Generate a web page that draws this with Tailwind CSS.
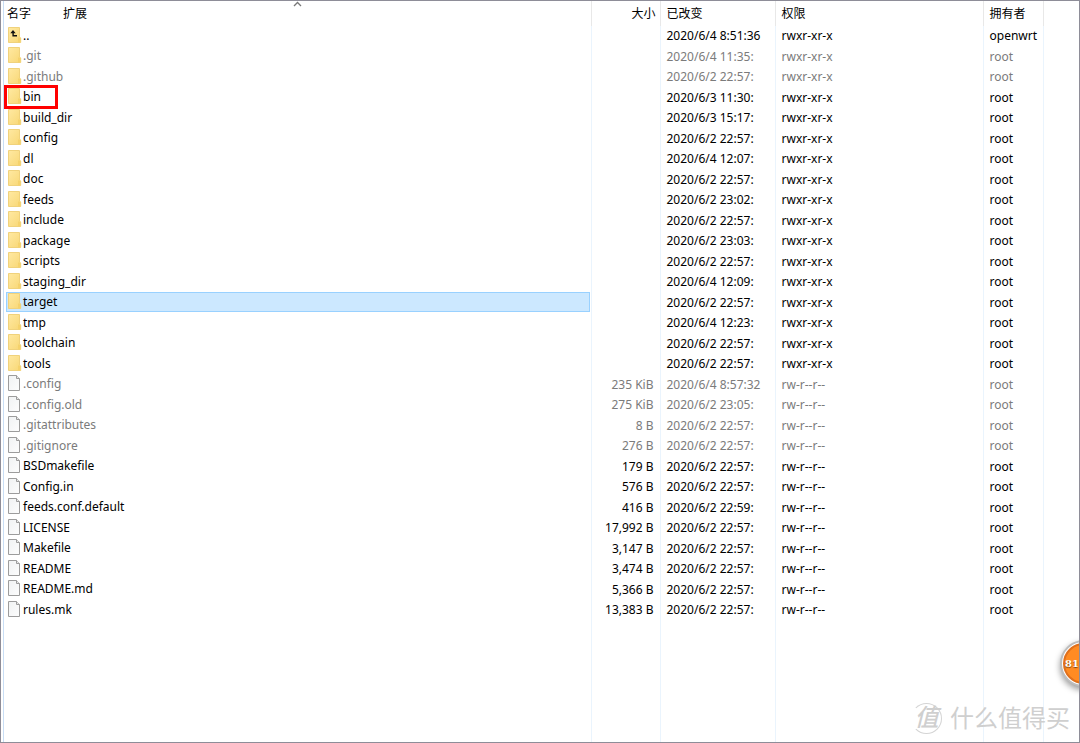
<!DOCTYPE html>
<html lang="zh-CN">
<head>
<meta charset="utf-8">
<title>文件列表</title>
<script src="https://cdn.jsdelivr.net/npm/@tailwindcss/browser@4"></script>
</head>
<body class="bg-white font-['Noto_Sans','Noto_Sans_CJK_SC',sans-serif] text-xs text-black">
<svg class="absolute size-0" aria-hidden="true">
  <defs>
    <linearGradient id="fold" x1="0" y1="0" x2="1" y2="1"><stop offset="0" stop-color="#ffe9a2"/><stop offset="1" stop-color="#f8d775"/></linearGradient>
    <linearGradient id="paper" x1="0" y1="0" x2="1" y2="1"><stop offset="0" stop-color="#f0f2f3"/><stop offset="1" stop-color="#fdfdfd"/></linearGradient>
  </defs>
  <symbol id="dir" viewBox="0 0 14 16"><path d="M.5.5h11v9.5l1.2 1v4.5H.5z" fill="url(#fold)" stroke="#f0d27c"/><path d="M10 10.5h2.5v5H10z" fill="#f5d26c"/></symbol>
  <symbol id="up" viewBox="0 0 14 16"><use href="#dir"/><path d="M2.3 6.2 5 3l2.7 3.2H5.8v1.9H9v1.4H4.4V6.2z" fill="#111"/></symbol>
  <symbol id="file" viewBox="0 0 14 16"><path d="M.5.5h8l3 3v12H.5z" fill="url(#paper)" stroke="#9c9c9c"/><path d="M8.5.5v3h3" fill="#e8e8e8" stroke="#9c9c9c"/></symbol>
</svg>
<main class="relative h-screen overflow-hidden border border-[#8e8d98] pl-[2px]">
  <table class="h-full w-full table-fixed border-collapse border-l border-[#c9def5]">
    <colgroup><col><col class="w-[69px]"><col class="w-[115px]"><col class="w-[208px]"><col class="w-[60px]"><col class="w-[36px]"></colgroup>
    <thead>
      <tr class="h-[25px] text-left [&>th]:border-r [&>th]:border-[#e8e8e8] [&>th]:p-0 [&>th]:font-normal [&>th:last-child]:border-0">
        <th class="relative"><div class="flex gap-8 pl-[3px]"><span>名字</span><span>扩展</span></div>
          <svg class="absolute top-0 left-1/2 -ml-1 h-[6px] w-[9px]" viewBox="0 0 9 6" fill="none" stroke="#777" stroke-width="1.3"><path d="m1 5 3.5-3.5L8 5"/></svg></th>
        <th><div class="pr-1 text-right">大小</div></th>
        <th><div class="pl-1.5">已改变</div></th>
        <th><div class="pl-1.5">权限</div></th>
        <th><div class="pl-1.5">拥有者</div></th>
        <th></th>
      </tr>
    </thead>
    <tbody id="rows"></tbody>
  </table>
  <div class="pointer-events-none absolute right-[9px] bottom-2 flex items-center gap-2 text-[#cfcfcf]">
    <span class="flex size-[31px] items-center justify-center rounded-full border border-[#d4d4d4] border-l-transparent pb-0.5 text-2xl leading-none font-medium italic">值</span>
    <span class="text-2xl leading-8">什么值得买</span>
  </div>
  <button type="button" class="absolute top-[639px] -right-7 flex size-[47px] items-center rounded-full border-2 border-[#bdbdbd] bg-white p-px shadow-[0_3px_6px_#0006]">
    <span class="flex size-full items-center rounded-full border-2 border-[#e0701c] bg-[#ff8b22] font-['DejaVu_Serif',serif] text-[10px] font-bold text-white [text-shadow:0_1px_1px_#0008]">81</span>
  </button>
</main>
<script>
const entries = `..||2020/6/4 8:51:36|openwrt
.git||2020/6/4 11:35:
.github||2020/6/2 22:57:
bin||2020/6/3 11:30:
build_dir||2020/6/3 15:17:
config||2020/6/2 22:57:
dl||2020/6/4 12:07:
doc||2020/6/2 22:57:
feeds||2020/6/2 23:02:
include||2020/6/2 22:57:
package||2020/6/2 23:03:
scripts||2020/6/2 22:57:
staging_dir||2020/6/4 12:09:
target||2020/6/2 22:57:
tmp||2020/6/4 12:23:
toolchain||2020/6/2 22:57:
tools||2020/6/2 22:57:
.config|235 KiB|2020/6/4 8:57:32
.config.old|275 KiB|2020/6/2 23:05:
.gitattributes|8 B|2020/6/2 22:57:
.gitignore|276 B|2020/6/2 22:57:
BSDmakefile|179 B|2020/6/2 22:57:
Config.in|576 B|2020/6/2 22:57:
feeds.conf.default|416 B|2020/6/2 22:59:
LICENSE|17,992 B|2020/6/2 22:57:
Makefile|3,147 B|2020/6/2 22:57:
README|3,474 B|2020/6/2 22:57:
README.md|5,366 B|2020/6/2 22:57:
rules.mk|13,383 B|2020/6/2 22:57:`.split('\n').map(line => line.split('|'));
const cells = '[&>td]:border-r [&>td]:border-[#eaf4fd] [&>td]:p-0 [&>td:last-child]:border-0';
document.getElementById('rows').innerHTML = entries.map(([name, size, date, owner = 'root']) => {
  const icon = name === '..' ? 'up' : size ? 'file' : 'dir';
  const tone = /^\.\w/.test(name) ? 'text-[#7b7b7b]' : 'text-black';
  const pick = name === 'target' ? 'border-[#99d1ff] bg-[#cce8ff]' : 'border-transparent';
  const mark = name === 'bin' ? '<span class="absolute -top-[3px] -left-[3px] h-6 w-[54px] border-3 border-[#f00]"></span>' : '';
  return `<tr class="h-5 even:h-[21px] whitespace-nowrap leading-4 ${tone} ${cells}">
    <td class="align-top"><div class="relative ml-0.5 mr-px flex h-5 items-center border pl-px ${pick}"><svg class="mr-px mb-0.5 h-4 w-[14px] shrink-0"><use href="#${icon}"/></svg>${name}${mark}</div></td>
    <td><div class="pr-1.5 text-right">${size}</div></td>
    <td><div class="pl-1.5">${date}</div></td>
    <td><div class="pl-1.5">${size ? 'rw-r--r--' : 'rwxr-xr-x'}</div></td>
    <td><div class="pl-1.5">${owner}</div></td><td></td></tr>`;
}).join('') + `<tr class="${cells}"><td></td><td></td><td></td><td></td><td></td><td></td></tr>`;
</script>
</body>
</html>
